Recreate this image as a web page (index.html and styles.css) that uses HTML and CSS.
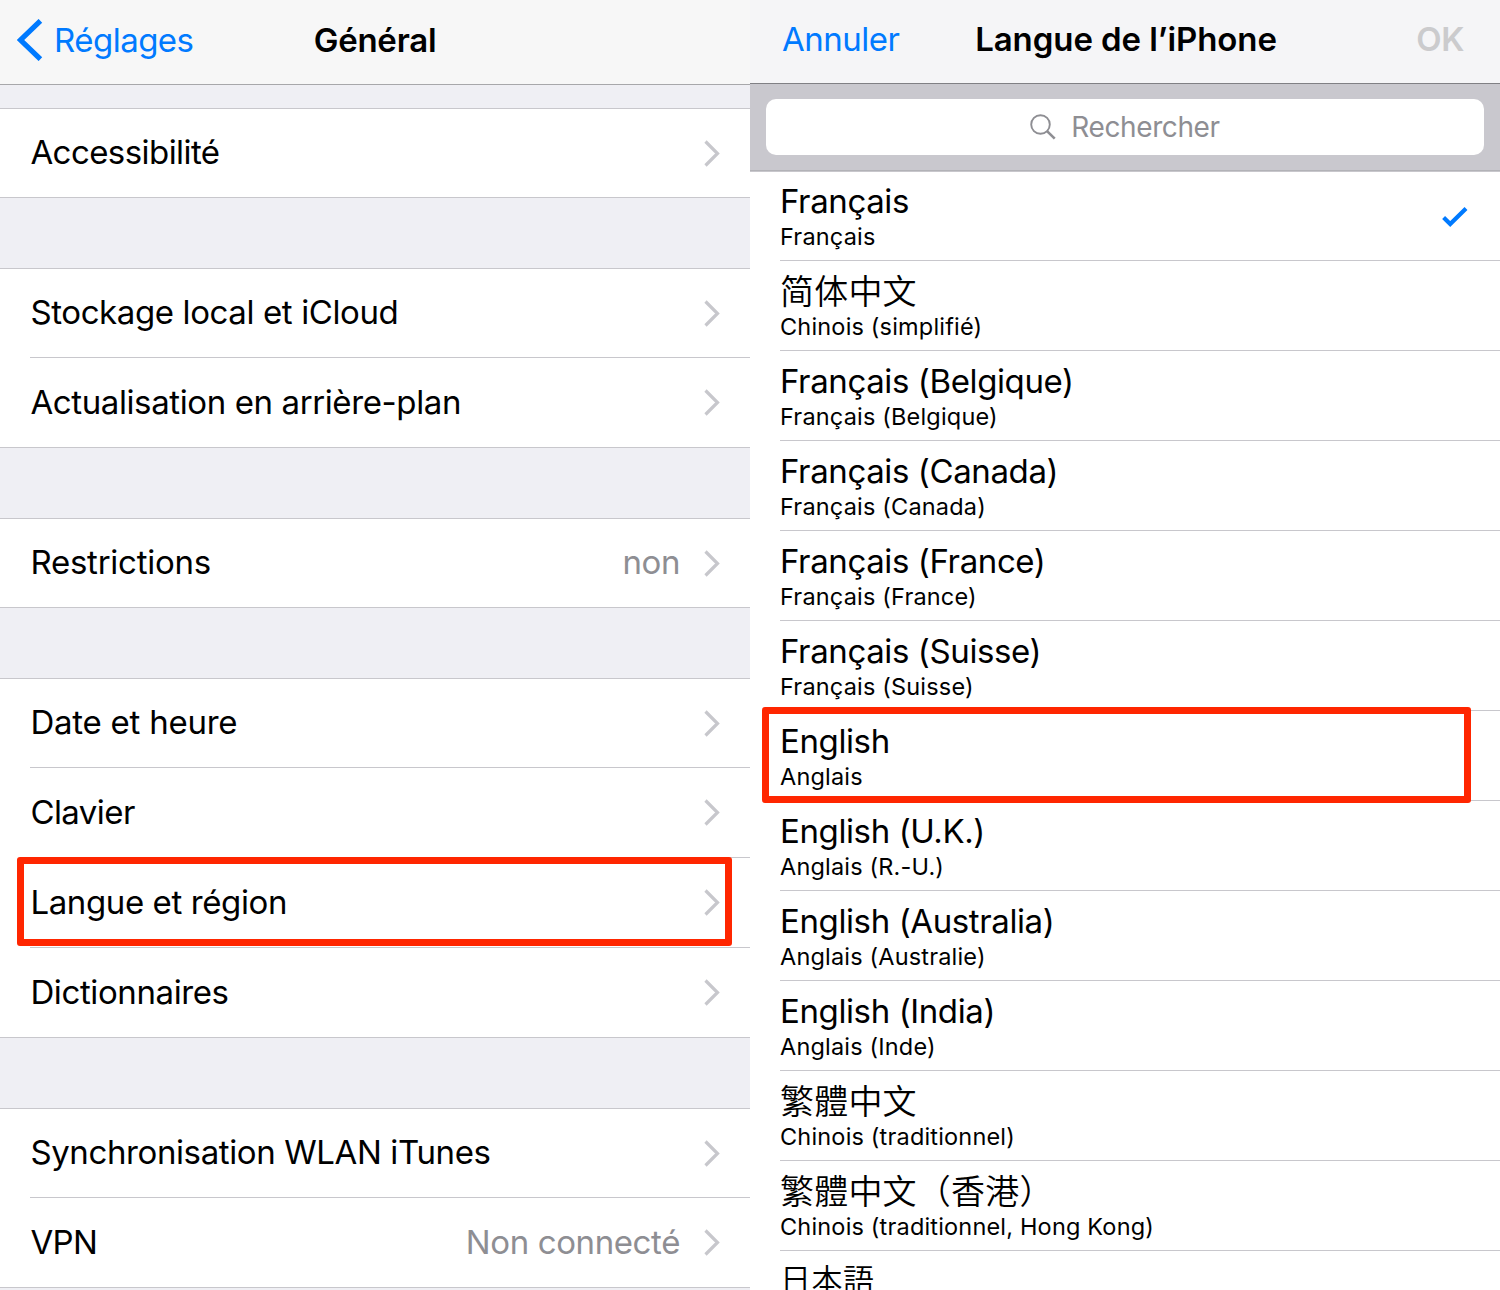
FILE: index.html
```html
<!DOCTYPE html>
<html lang="fr">
<head>
<meta charset="utf-8">
<title>Réglages</title>
<link rel="stylesheet" href="styles.css">
</head>
<body>
<svg class="defs" aria-hidden="true">
  <symbol id="chevron" viewBox="0 0 16 27"><path d="M1.5 1.5 13.5 13.5 1.5 25.5" fill="none" stroke="currentColor" stroke-width="3.2"/></symbol>
</svg>
<main class="screens">
  <section class="screen settings">
    <header class="navbar">
      <a class="back"><svg class="back-icon" viewBox="0 0 26 42"><path d="M23.4 1.8 3.6 21 23.4 40.2" fill="none" stroke="currentColor" stroke-width="5.2"/></svg><span>Réglages</span></a>
      <h1 class="title">Général</h1>
    </header>
    <div class="groups">
      <ul class="group">
        <li class="row"><span class="label tight">Accessibilité</span><svg class="chevron"><use href="#chevron"/></svg></li>
      </ul>
      <ul class="group">
        <li class="row"><span class="label">Stockage local et iCloud</span><svg class="chevron"><use href="#chevron"/></svg></li>
        <li class="row"><span class="label">Actualisation en arrière-plan</span><svg class="chevron"><use href="#chevron"/></svg></li>
      </ul>
      <ul class="group">
        <li class="row"><span class="label loose">Restrictions</span><span class="value">non</span><svg class="chevron"><use href="#chevron"/></svg></li>
      </ul>
      <ul class="group">
        <li class="row"><span class="label loose">Date et heure</span><svg class="chevron"><use href="#chevron"/></svg></li>
        <li class="row"><span class="label tight">Clavier</span><svg class="chevron"><use href="#chevron"/></svg></li>
        <li class="row marked"><span class="label">Langue et région</span><svg class="chevron"><use href="#chevron"/></svg></li>
        <li class="row"><span class="label">Dictionnaires</span><svg class="chevron"><use href="#chevron"/></svg></li>
      </ul>
      <ul class="group">
        <li class="row"><span class="label">Synchronisation WLAN iTunes</span><svg class="chevron"><use href="#chevron"/></svg></li>
        <li class="row"><span class="label tight">VPN</span><span class="value">Non connecté</span><svg class="chevron"><use href="#chevron"/></svg></li>
      </ul>
    </div>
  </section>
  <section class="screen languages">
    <header class="navbar">
      <a class="cancel">Annuler</a>
      <h1 class="title">Langue de l’iPhone</h1>
      <span class="done">OK</span>
    </header>
    <div class="searchbar">
      <div class="field"><svg class="search-icon" viewBox="0 0 26 26"><circle cx="10.5" cy="10.5" r="9.3" fill="none" stroke="currentColor" stroke-width="1.9"/><path d="M16.8 16.8 24.7 24.7" stroke="currentColor" stroke-width="2.6"/></svg><span>Rechercher</span></div>
    </div>
    <ul class="list">
      <li class="lang"><div class="names"><span class="name">Français</span><span class="sub">Français</span></div><svg class="check" viewBox="0 0 26 20"><path d="M1.6 10.6 8.2 17 24 1.6" fill="none" stroke="currentColor" stroke-width="4.2"/></svg></li>
      <li class="lang"><div class="names"><span class="name sc" lang="zh-Hans">简体中文</span><span class="sub">Chinois (simplifié)</span></div></li>
      <li class="lang"><div class="names"><span class="name">Français (Belgique)</span><span class="sub">Français (Belgique)</span></div></li>
      <li class="lang"><div class="names"><span class="name">Français (Canada)</span><span class="sub">Français (Canada)</span></div></li>
      <li class="lang"><div class="names"><span class="name">Français (France)</span><span class="sub">Français (France)</span></div></li>
      <li class="lang"><div class="names"><span class="name">Français (Suisse)</span><span class="sub">Français (Suisse)</span></div></li>
      <li class="lang marked"><div class="names"><span class="name">English</span><span class="sub">Anglais</span></div></li>
      <li class="lang"><div class="names"><span class="name">English (U.K.)</span><span class="sub">Anglais (R.-U.)</span></div></li>
      <li class="lang"><div class="names"><span class="name">English (Australia)</span><span class="sub">Anglais (Australie)</span></div></li>
      <li class="lang"><div class="names"><span class="name">English (India)</span><span class="sub">Anglais (Inde)</span></div></li>
      <li class="lang"><div class="names"><span class="name tc" lang="zh-Hant">繁體中文</span><span class="sub">Chinois (traditionnel)</span></div></li>
      <li class="lang"><div class="names"><span class="name tc" lang="zh-Hant">繁體中文（香港）</span><span class="sub">Chinois (traditionnel, Hong Kong)</span></div></li>
      <li class="lang"><div class="names"><span class="name jp" lang="ja">日本語</span></div></li>
    </ul>
  </section>
</main>
</body>
</html>
```
FILE: styles.css
```css
*, *::after { box-sizing: border-box; }
body {
  margin: 0;
  background: #fff;
  color: #000;
  font-family: Inter, "Liberation Sans", sans-serif;
  font-size: 33px;
  line-height: 40px;
  letter-spacing: -0.39px;
}
ul { list-style: none; margin: 0; padding: 0; }
.defs { position: absolute; width: 0; height: 0; }
.screens { display: grid; grid-template-columns: 750px 750px; height: 1290px; overflow: hidden; }
.screen { height: 1290px; overflow: hidden; }
.settings { background: #efeff4; }
.languages { background: #fff; }

.navbar { display: grid; grid-template-columns: 1fr auto 1fr; align-items: center; white-space: nowrap; }
.settings .navbar { height: 85px; padding: 0 17px 4px; background: #f7f7f7; border-bottom: 1px solid #a7a7aa; }
.languages .navbar { height: 84px; padding: 0 32px 5px; background: #f5f5f7; border-bottom: 1px solid #808084; }
.title { margin: 0; font-size: 33px; font-weight: 600; letter-spacing: -0.25px; }
.languages .title { padding-left: 2px; letter-spacing: -0.08px; }
.back, .cancel { display: flex; align-items: center; gap: 11px; color: #007aff; letter-spacing: -0.52px; }
.back-icon { width: 26px; height: 42px; }
.done { justify-self: end; margin-right: 4px; font-weight: 600; color: #cbcbcd; }

.groups { display: flex; flex-direction: column; gap: 70px; padding-top: 23px; }
.group { background: #fff; border-top: 1px solid #c8c7cc; border-bottom: 1px solid #c8c7cc; }
.row { position: relative; display: flex; align-items: center; height: 90px; margin-left: 30px; padding-right: 30px; border-bottom: 1px solid #c8c7cc; }
.row:first-child { height: 89px; }
.row:last-child { height: 89px; border-bottom: 0; }
.row:only-child { height: 88px; }
.label { margin-right: auto; padding: 0 0 2px 0.4px; }
.tight { letter-spacing: -0.56px; }
.loose { letter-spacing: -0.24px; }
.value { margin-right: 24px; padding-bottom: 2px; color: #8e8e93; }
.chevron { width: 16px; height: 27px; color: #c7c7cc; }

.searchbar { height: 87px; padding: 15px 16px; background: #c9c8ce; border-bottom: 1px solid #b2b2b7; }
.field { display: flex; align-items: center; justify-content: center; gap: 15px; height: 56px; border-radius: 10px; background: #fff; color: #8e8e93; font-size: 28px; }
.search-icon { width: 26px; height: 26px; }
.list { border-top: 1px solid #c8c7cc; }
.lang { position: relative; display: flex; align-items: center; justify-content: space-between; height: 90px; margin-left: 30px; padding-right: 32px; border-bottom: 1px solid #c8c7cc; }
.lang:first-child { height: 89px; }
.names { display: flex; flex-direction: column; align-items: flex-start; height: 70px; white-space: nowrap; }
.name { flex: none; height: 41px; }
.sub { flex: none; height: 30px; font-size: 23.5px; line-height: 30px; letter-spacing: 0.18px; }
.sc, .tc, .jp { font-weight: 350; line-height: 37px; letter-spacing: 0.2px; }
.sc { font-family: "Noto Sans CJK SC", sans-serif; font-size: 34px; }
.tc { font-family: "Noto Sans CJK TC", sans-serif; font-size: 34px; }
.jp { font-family: "Noto Sans CJK JP", sans-serif; font-size: 31px; line-height: 34px; letter-spacing: 0.5px; }
.check { width: 26px; height: 20px; margin-top: 1px; color: #007aff; }

/* Highlight frames drawn over the marked rows */
.marked::after { content: ""; position: absolute; z-index: 1; border: 7px solid #ff2600; border-radius: 3px; }
.row.marked::after { left: -13px; top: -1px; width: 715px; height: 89px; }
.lang.marked::after { left: -18px; top: -4.5px; width: 709px; height: 96.5px; }
```
